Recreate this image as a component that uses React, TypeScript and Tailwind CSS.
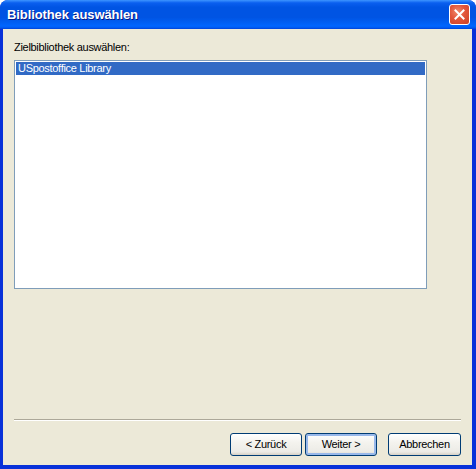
import React from "react";

export default function App() {
  const font = { fontFamily: '"Liberation Sans", Arial, sans-serif' };
  return (
    <div className="w-[476px] h-[469px] bg-white" style={font}>
      <div className="w-[476px] h-[469px] flex flex-col rounded-t-[8px] overflow-hidden bg-[#0831D9]">
        {/* Title bar */}
        <div className="h-[29px] shrink-0 flex items-center justify-between pl-[7px] pr-[6px] bg-[linear-gradient(180deg,#3D95FF_0%,#0A5FEF_10%,#0054E3_25%,#0054E3_60%,#0060F5_80%,#0066FF_90%,#0058EE_96%,#0040D8_100%)]">
          <span className="text-white font-bold text-[13px] leading-none tracking-[-0.1px] [text-shadow:1px_1px_0_#0A1883]">
            Bibliothek auswählen
          </span>
          <div className="w-[21px] h-[21px] rounded-[3px] border border-white bg-[radial-gradient(circle_at_40%_35%,#F08A6C_0%,#E2553A_45%,#CC4125_100%)] flex items-center justify-center">
            <svg width="11" height="11" viewBox="0 0 11 11">
              <path d="M1.5 1.5 L9.5 9.5 M9.5 1.5 L1.5 9.5" stroke="white" strokeWidth="2" strokeLinecap="square" />
            </svg>
          </div>
        </div>
        {/* Body */}
        <div className="flex-1 flex ml-[3px] mr-[4px] mb-[4px] bg-[#ECE9D8]">
          <div className="flex-1 flex flex-col pl-[11px] pr-[11px]">
            <div className="mt-[12px] h-[13px] text-[11px] leading-[13px] tracking-[-0.3px] text-black">
              Zielbibliothek auswählen:
            </div>
            <div className="mt-[6px] w-[413px] h-[229px] border border-[#7F9DB9] bg-white p-[1px]">
              <div className="h-[13px] bg-[#316AC5] text-white text-[11px] leading-[13px] tracking-[-0.3px] pl-[2px]">
                USpostoffice Library
              </div>
            </div>
            <div className="mt-[130px] h-[2px] border-t border-[#ACA899] border-b border-b-white"></div>
            <div className="mt-[12px] flex justify-end">
              <button className="w-[72px] h-[23px] rounded-[3px] border border-[#003C74] bg-[linear-gradient(180deg,#FFFFFF_0%,#F4F3EE_40%,#ECEBE6_85%,#D6D0C5_100%)] text-[11px] tracking-[-0.3px] text-black">
                &lt; Zurück
              </button>
              <button className="ml-[3px] w-[72px] h-[23px] rounded-[3px] border border-[#003C74] bg-[linear-gradient(180deg,#FFFFFF_0%,#F4F3EE_40%,#ECEBE6_85%,#D6D0C5_100%)] shadow-[inset_0_0_0_2px_#98B8EA] text-[11px] tracking-[-0.3px] text-black">
                Weiter &gt;
              </button>
              <button className="ml-[11px] w-[73px] h-[23px] rounded-[3px] border border-[#003C74] bg-[linear-gradient(180deg,#FFFFFF_0%,#F4F3EE_40%,#ECEBE6_85%,#D6D0C5_100%)] text-[11px] tracking-[-0.3px] text-black">
                Abbrechen
              </button>
            </div>
          </div>
        </div>
      </div>
    </div>
  );
}
